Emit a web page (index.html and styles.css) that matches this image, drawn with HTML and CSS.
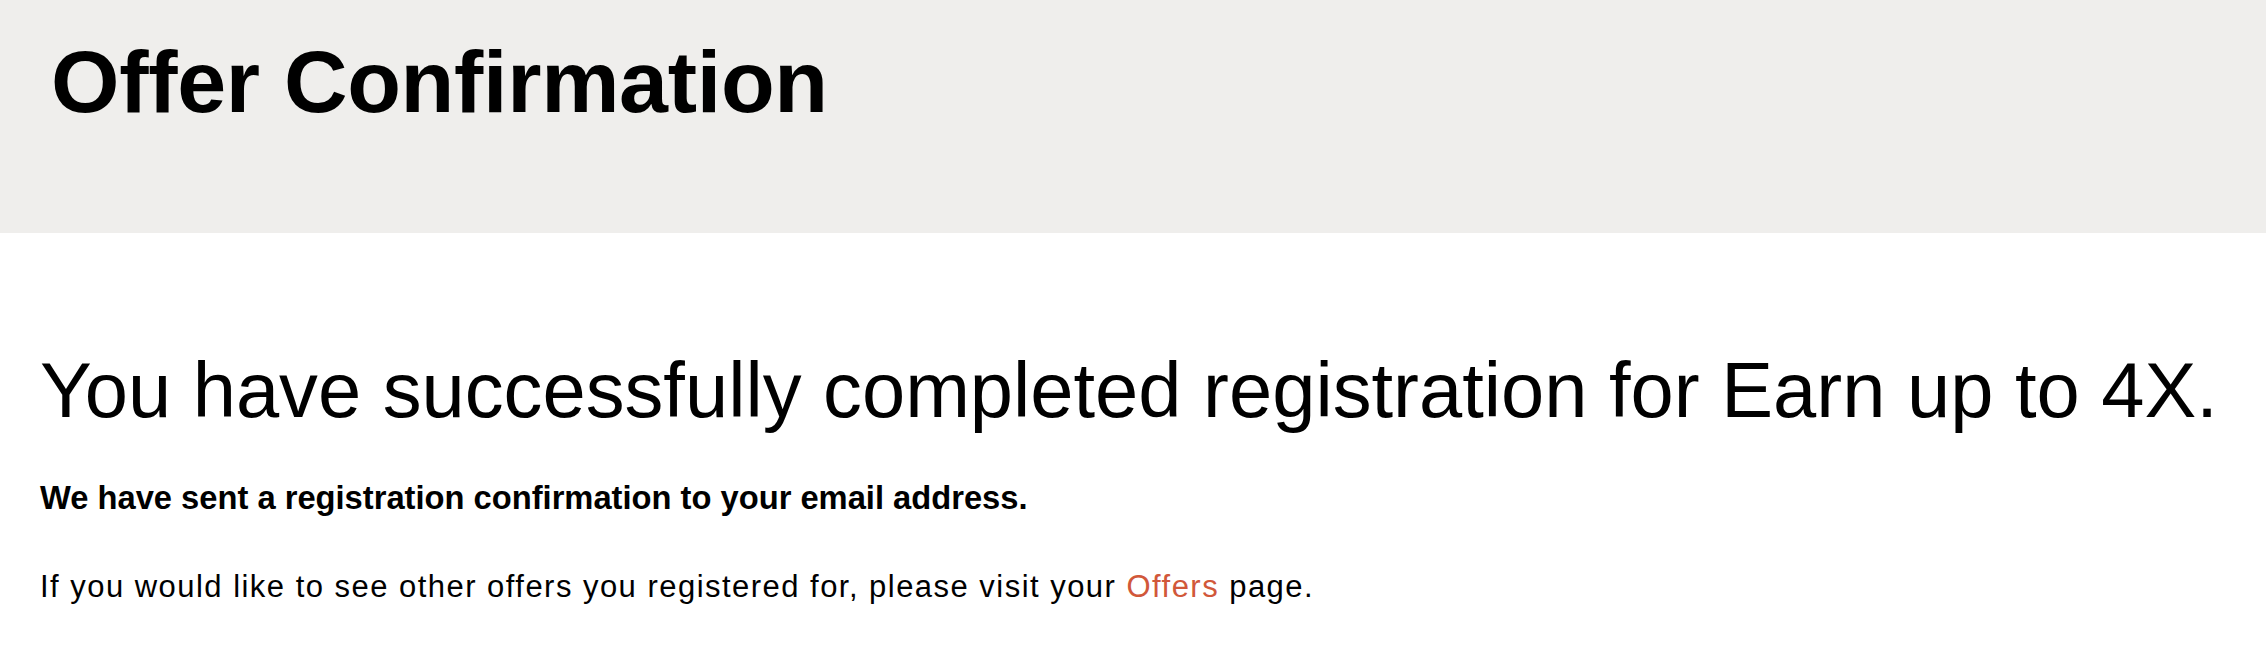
FILE: index.html
```html
<!DOCTYPE html>
<html lang="en">
<head>
	<meta charset="UTF-8">
	<title>Offer Confirmation</title>
	<link rel="stylesheet" href="styles.css">
</head>
<body>
	<!-- 页头 -->
	<div class="banner">
		<h1>Offer Confirmation</h1>
	</div>

	<!-- 确认信息 -->
	<div class="content">
		<h2>You have successfully completed registration for Earn up to 4X.</h2>
		<p class="sent">We have sent a registration confirmation to your email address.</p>
		<p class="more">If you would like to see other offers you registered for, please visit your <a href="#">Offers</a> page.</p>
	</div>
</body>
</html>
```

FILE: styles.css
```css
*{
	margin: 0;
	padding: 0;
}
body{
	font-family: "Liberation Sans", Arial, sans-serif;
	color: #000;
	background-color: #fff;
}
.banner{
	height: 233px;
	padding: 32px 0 0 51px;
	box-sizing: border-box;
	background-color: #efeeec;
}
.banner h1{
	font-size: 88px;
	line-height: 100px;
	font-weight: bold;
	letter-spacing: -0.3px;
}
.content{
	padding: 112px 0 0 40px;
}
.content h2{
	font-size: 77.7px;
	line-height: 90px;
	font-weight: normal;
}
.content .sent{
	margin-top: 43px;
	font-size: 32.7px;
	line-height: 40px;
	font-weight: bold;
}
.content .more{
	margin-top: 49px;
	font-size: 31px;
	line-height: 40px;
	letter-spacing: 1.47px;
}
.content .more a{
	color: #d1583a;
	text-decoration: none;
}
```
